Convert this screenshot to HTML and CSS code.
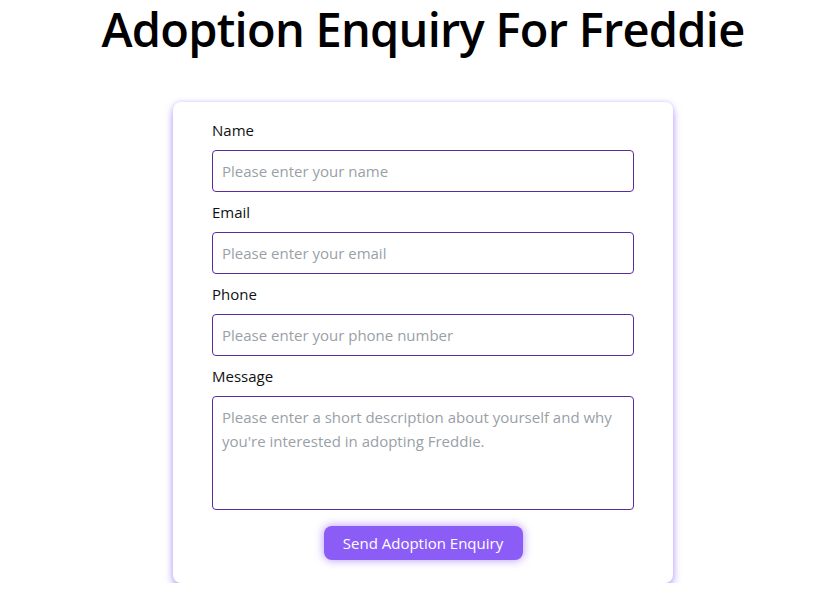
FILE: index.html
```html
<!DOCTYPE html>
<html lang="en">
<head>
<meta charset="utf-8">
<title>Adoption Enquiry For Freddie</title>
<link rel="stylesheet" href="styles.css">
</head>
<body>
<main class="page">
  <h1 class="title">Adoption Enquiry For Freddie</h1>
  <form class="card">
    <div class="field">
      <label class="label" for="name">Name</label>
      <input class="input" id="name" type="text" placeholder="Please enter your name">
    </div>
    <div class="field">
      <label class="label" for="email">Email</label>
      <input class="input" id="email" type="email" placeholder="Please enter your email">
    </div>
    <div class="field">
      <label class="label" for="phone">Phone</label>
      <input class="input" id="phone" type="tel" placeholder="Please enter your phone number">
    </div>
    <div class="field">
      <label class="label" for="message">Message</label>
      <textarea class="input textarea" id="message" rows="4" placeholder="Please enter a short description about yourself and why you're interested in adopting Freddie."></textarea>
    </div>
    <div class="actions">
      <button class="button" type="button">Send Adoption Enquiry</button>
    </div>
  </form>
</main>
</body>
</html>
```
FILE: styles.css
```css
* { box-sizing: border-box; }
html, body { margin: 0; padding: 0; background: #ffffff; }
body {
  font-family: "Open Sans", "Noto Sans", sans-serif;
  color: #111111;
}
.page {
  display: flex;
  flex-direction: column;
  align-items: center;
  padding-left: 12px;
}
.title {
  margin: 0;
  padding-top: 1px;
  font-size: 47px;
  line-height: 56px;
  font-weight: 600;
  color: #000;
  letter-spacing: -0.75px;
}
.card {
  margin-top: 45px;
  width: 500px;
  background: #fff;
  border-radius: 8px;
  padding: 16px 39px 23px;
  box-shadow: 0 5px 9px 0 rgba(167, 139, 250, 0.75), 0 0 5px rgba(196, 181, 253, 0.6);
}
.field {
  display: flex;
  flex-direction: column;
  gap: 8px;
  margin-bottom: 8px;
}
.label {
  font-size: 15px;
  line-height: 24px;
  color: #111;
}
.input {
  width: 100%;
  font-family: inherit;
  font-size: 15px;
  line-height: 24px;
  padding: 8px 9px;
  border: 1px solid #5b2aa0;
  border-radius: 4px;
  color: #111;
  background: #fff;
  outline: none;
}
.input::placeholder { color: #9a9fa8; }
.textarea {
  height: 114px;
  resize: none;
  display: block;
}
.actions {
  display: flex;
  justify-content: center;
  padding-top: 8px;
}
.button {
  font-family: inherit;
  font-size: 15px;
  line-height: 24px;
  padding: 5px 18px;
  width: 199px;
  color: #fff;
  background: #8b5cf6;
  border: none;
  border-radius: 8px;
  box-shadow: 0 0 8px 1px rgba(139, 92, 246, 0.55);
}
```
